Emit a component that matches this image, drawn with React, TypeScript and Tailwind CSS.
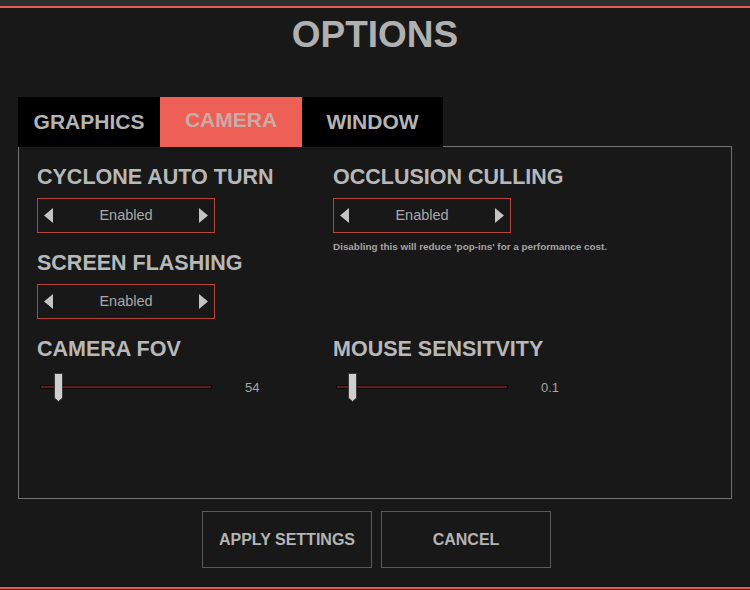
const font = { fontFamily: '"Liberation Sans", Arial, sans-serif' };

function Arrow({ dir }: { dir: 'left' | 'right' }) {
  return (
    <svg width="9" height="15" viewBox="0 0 9 15" className="shrink-0">
      {dir === 'left' ? (
        <polygon points="9,0 9,15 0,7.5" fill="#c4c4c4" />
      ) : (
        <polygon points="0,0 0,15 9,7.5" fill="#c4c4c4" />
      )}
    </svg>
  );
}

function Selector({ value }: { value: string }) {
  return (
    <div className="flex h-[35px] w-[178px] items-center justify-between border border-[#b5453d] px-[6px]">
      <Arrow dir="left" />
      <span className="text-[14.5px] text-[#a8a8a8]">{value}</span>
      <Arrow dir="right" />
    </div>
  );
}

function Label({ children }: { children: string }) {
  return (
    <div className="h-[24px] text-[21.5px] font-bold leading-[24px] whitespace-nowrap text-[#b8b8b8]">
      {children}
    </div>
  );
}

function Slider({ pos, value }: { pos: number; value: string }) {
  return (
    <div className="ml-[3px] flex h-[32px] items-center">
      <div className="relative h-[32px] w-[172px]">
        <div className="absolute top-[13px] left-0 h-[4px] w-full border border-[#0a0a0a] bg-[#5e1c1c]" />
        <svg
          width="9"
          height="29"
          viewBox="0 0 9 29"
          className="absolute top-[1px]"
          style={{ left: pos }}
        >
          <path d="M0.5 0.5 H8.5 V25 L4.5 28.5 L0.5 25 Z" fill="#cfcfcf" stroke="#3a3a3a" />
        </svg>
      </div>
      <span className="ml-[33px] text-[13px] text-[#a6a6a6]">{value}</span>
    </div>
  );
}

export default function App() {
  return (
    <div className="flex h-[590px] w-[750px] flex-col overflow-hidden bg-[#181818]" style={font}>
      <div className="h-[6px] bg-[#2d2d2d]" />
      <div className="h-[2px] bg-[#e85a50]" />

      <h1 className="mt-[8px] text-center text-[37px] leading-none font-bold text-[#b0b0b0]">
        OPTIONS
      </h1>

      <div className="relative z-10 mt-[44px] ml-[18px] flex h-[50px] -mb-[1px]">
        <div className="flex w-[142px] items-center justify-center bg-black text-[21px] font-bold text-[#b4b4b4]">
          GRAPHICS
        </div>
        <div className="flex w-[142px] items-center justify-center bg-[#ee5f55] pb-[4px] text-[21px] font-bold text-[#c9aca6]">
          CAMERA
        </div>
        <div className="flex w-[141px] items-center justify-center bg-black text-[21px] font-bold text-[#b4b4b4]">
          WINDOW
        </div>
      </div>

      <div className="mx-[18px] flex h-[353px] border border-[#727272] pt-[18px] pl-[18px]">
        <div className="flex w-[296px] flex-col">
          <Label>CYCLONE AUTO TURN</Label>
          <div className="mt-[9px]">
            <Selector value="Enabled" />
          </div>
          <div className="mt-[18px]">
            <Label>SCREEN FLASHING</Label>
          </div>
          <div className="mt-[9px]">
            <Selector value="Enabled" />
          </div>
          <div className="mt-[18px]">
            <Label>CAMERA FOV</Label>
          </div>
          <div className="mt-[11px]">
            <Slider pos={14} value="54" />
          </div>
        </div>

        <div className="flex flex-col">
          <Label>OCCLUSION CULLING</Label>
          <div className="mt-[9px]">
            <Selector value="Enabled" />
          </div>
          <p className="mt-[8px] text-[9.9px] leading-[12px] font-bold whitespace-nowrap text-[#a4a4a4]">
            Disabling this will reduce 'pop-ins' for a performance cost.
          </p>
          <div className="mt-[84px]">
            <Label>MOUSE SENSITVITY</Label>
          </div>
          <div className="mt-[11px]">
            <Slider pos={12} value="0.1" />
          </div>
        </div>
      </div>

      <div className="mt-[12px] ml-[3px] flex justify-center gap-[9px]">
        <button className="flex h-[57px] w-[170px] items-center justify-center border border-[#5a5a5a] text-[16px] font-bold text-[#b4b4b4]">
          APPLY SETTINGS
        </button>
        <button className="flex h-[57px] w-[170px] items-center justify-center border border-[#5a5a5a] text-[16px] font-bold text-[#b4b4b4]">
          CANCEL
        </button>
      </div>

      <div className="flex-1" />
      <div className="h-[2px] bg-[#e85a50]" />
      <div className="h-[1px] bg-[#2d2d2d]" />
    </div>
  );
}
